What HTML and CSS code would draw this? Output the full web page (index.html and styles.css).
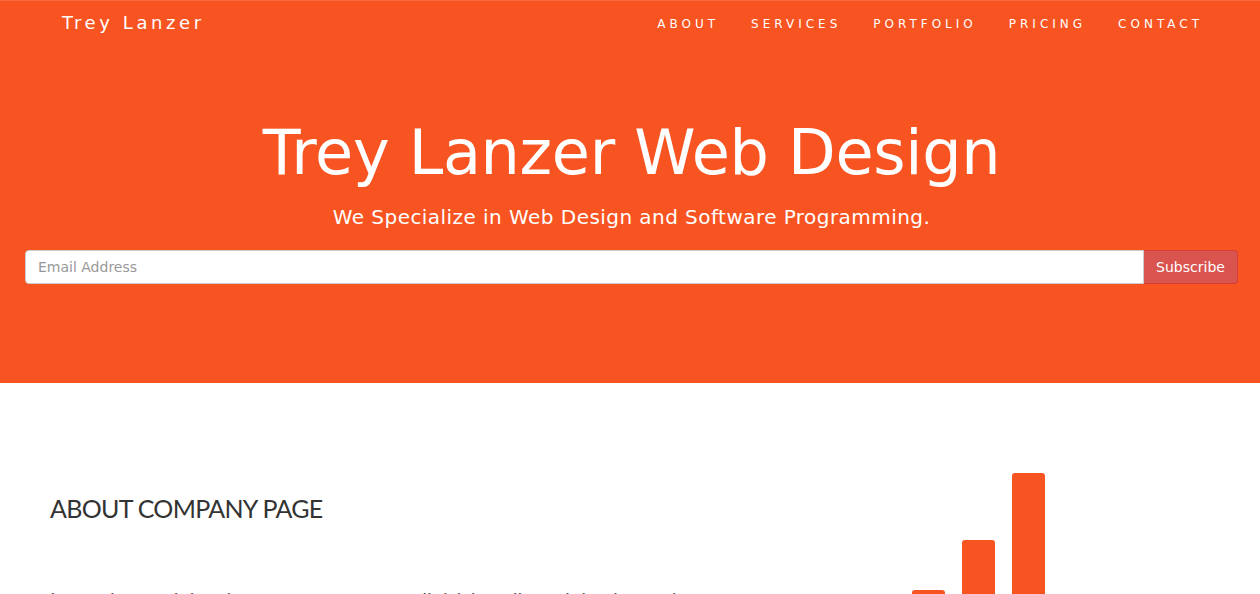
FILE: index.html
```html
<!DOCTYPE html>
<html lang="en">
<head>
<meta charset="utf-8">
<title>Trey Lanzer Web Design</title>
<link rel="stylesheet" href="styles.css">
</head>
<body>
<header class="hero">
  <nav class="topnav">
    <a class="brand" href="#">Trey Lanzer</a>
    <ul class="menu">
      <li><a href="#">About</a></li>
      <li><a href="#">Services</a></li>
      <li><a href="#">Portfolio</a></li>
      <li><a href="#">Pricing</a></li>
      <li><a href="#">Contact</a></li>
    </ul>
  </nav>
  <div class="hero-body">
    <h1 class="hero-title">Trey Lanzer Web Design</h1>
    <p class="hero-sub">We Specialize in Web Design and Software Programming.</p>
    <form class="subscribe">
      <input class="email" type="text" placeholder="Email Address">
      <button class="btn" type="button">Subscribe</button>
    </form>
  </div>
</header>
<section class="about">
  <div class="about-text">
    <h2 class="about-title">ABOUT COMPANY PAGE</h2>
    <p class="about-copy">Lorem ipsum dolor sit amet, consectetur adipisicing elit, sed do eiusmod tempor incididunt ut labore et dolore magna aliqua.</p>
  </div>
  <div class="chart">
    <div class="bar bar-1"></div>
    <div class="bar bar-2"></div>
    <div class="bar bar-3"></div>
  </div>
</section>
</body>
</html>
```
FILE: styles.css
```css
html, body {
  margin: 0;
  padding: 0;
}
body {
  font-family: "DejaVu Sans", "Open Sans", sans-serif;
  background: #ffffff;
  color: #333333;
  overflow: hidden;
}
.hero {
  background: #f75421;
  color: #ffffff;
  height: 383px;
  border-top: 1px solid #f86a3c;
  box-sizing: border-box;
}
.topnav {
  display: flex;
  justify-content: space-between;
  align-items: center;
  height: 42px;
  padding: 0 57px 0 62px;
}
.brand {
  color: #ffffff;
  text-decoration: none;
  font-size: 18px;
  letter-spacing: 3.6px;
}
.menu {
  display: flex;
  gap: 32px;
  list-style: none;
  margin: 0;
  padding: 0;
}
.menu a {
  color: #ffffff;
  text-decoration: none;
  font-size: 12px;
  letter-spacing: 4px;
  text-transform: uppercase;
}
.hero-body {
  text-align: center;
  padding: 0 22px 0 25px;
}
.hero-title {
  font-weight: normal;
  font-size: 62px;
  line-height: 80px;
  margin: 70px 0 0;
  letter-spacing: -0.3px;
}
.hero-sub {
  font-size: 20px;
  line-height: 26px;
  margin: 11px 0 0;
  letter-spacing: 0.45px;
}
.subscribe {
  display: flex;
  margin-top: 20px;
  height: 34px;
}
.email {
  flex: 1;
  border: 1px solid #cccccc;
  border-radius: 4px 0 0 4px;
  padding: 0 12px;
  font-family: inherit;
  font-size: 14px;
  color: #555555;
  background: #ffffff;
  outline: none;
}
.email::placeholder {
  color: #999999;
}
.btn {
  width: 94px;
  background: #d9534f;
  border: 1px solid #d43f3a;
  border-left: none;
  border-radius: 0 4px 4px 0;
  color: #ffffff;
  font-family: inherit;
  font-size: 14px;
  padding: 0;
}
.about {
  display: flex;
  padding: 0 0 0 50px;
}
.about-text {
  flex: 0 0 760px;
}
.about-title {
  font-family: Lato, "Liberation Sans", sans-serif;
  font-weight: normal;
  font-size: 25px;
  letter-spacing: -0.7px;
  margin: 110px 0 0;
  line-height: 30px;
  color: #333333;
}
.about-copy {
  font-family: Lato, "Liberation Sans", sans-serif;
  font-size: 20px;
  color: #555555;
  margin: 61px 0 0;
  line-height: 30px;
}
.chart {
  display: flex;
  align-items: flex-end;
  gap: 17px;
  margin-left: 102px;
  height: 237px;
}
.bar {
  width: 33px;
  background: #f75421;
  border-radius: 3px 3px 0 0;
}
.bar-1 { height: 30px; }
.bar-2 { height: 80px; }
.bar-3 { height: 147px; }
```
